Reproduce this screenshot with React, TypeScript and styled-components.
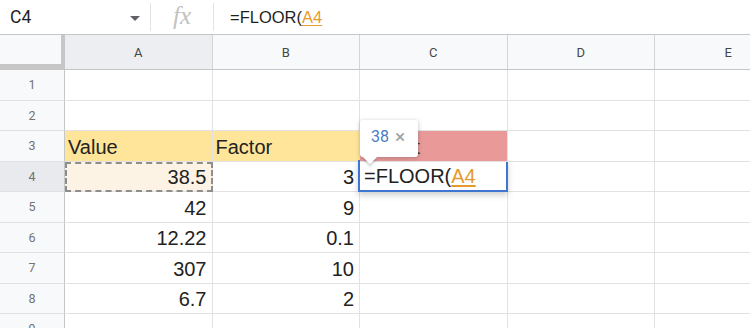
import styled, { createGlobalStyle } from "styled-components";

const GlobalStyle = createGlobalStyle`
  html, body {
    margin: 0;
    padding: 0;
    background: #ffffff;
  }
  body {
    font-family: "Liberation Sans", Arial, sans-serif;
  }
`;

const COLS = ["A", "B", "C", "D", "E"];
const HEAD_W = 65;
const COL_W = 147.5;

type CellData = { text?: string; align?: "left" | "right"; fill?: string };

const ROWS: CellData[][] = [
  [],
  [],
  [
    { text: "Value", fill: "#ffe599" },
    { text: "Factor", fill: "#ffe599" },
    { text: "Result", fill: "#ea9999" },
  ],
  [{ text: "38.5", align: "right" }, { text: "3", align: "right" }],
  [{ text: "42", align: "right" }, { text: "9", align: "right" }],
  [{ text: "12.22", align: "right" }, { text: "0.1", align: "right" }],
  [{ text: "307", align: "right" }, { text: "10", align: "right" }],
  [{ text: "6.7", align: "right" }, { text: "2", align: "right" }],
  [],
];

const Page = styled.div`
  width: 750px;
  height: 328px;
  overflow: hidden;
  background: #fff;
`;

const FormulaBar = styled.div`
  display: flex;
  align-items: center;
  height: 34px;
  border-bottom: 1px solid #c4c7c5;
  background: #fff;
`;

const NameBox = styled.div`
  width: 150px;
  display: flex;
  align-items: center;
  justify-content: space-between;
  padding: 0 10px 0 10px;
  box-sizing: border-box;
  font-family: Roboto, "Liberation Sans", sans-serif;
  font-size: 17.5px;
  color: #1f1f1f;
`;

const Caret = styled.span`
  width: 0;
  height: 0;
  border-left: 5px solid transparent;
  border-right: 5px solid transparent;
  border-top: 5px solid #5f6368;
  margin-top: 2px;
`;

const Divider = styled.div`
  width: 1px;
  height: 28px;
  background: #e3e3e3;
`;

const FxBox = styled.div`
  width: 62px;
  display: flex;
  align-items: center;
  justify-content: center;
  font-family: "Liberation Serif", "DejaVu Serif", serif;
  font-style: italic;
  font-size: 25px;
  color: #c2c2c2;
  padding-bottom: 2px;
`;

const FormulaText = styled.div`
  padding-left: 16px;
  font-family: "Liberation Sans", Arial, sans-serif;
  font-size: 16.5px;
  color: #1f1f1f;
`;

const Ref = styled.span`
  color: #e69a2e;
  text-decoration: underline;
  text-underline-offset: 2px;
`;

const Grid = styled.div`
  display: grid;
  grid-template-columns: ${HEAD_W}px repeat(${COLS.length}, ${COL_W}px);
  grid-template-rows: 35px;
  grid-auto-rows: 30.5px;
  width: ${HEAD_W + COL_W * COLS.length}px;
`;

const Corner = styled.div`
  background: #f8f9fa;
  box-shadow: inset -4px -6px 0 #c7c7c7;
`;

const ColHead = styled.div<{ $active?: boolean }>`
  display: flex;
  align-items: center;
  justify-content: center;
  background: ${(p) => (p.$active ? "#eceef1" : "#f8f9fa")};
  border-right: 1px solid #d4d4d4;
  border-bottom: 1px solid #c4c7c5;
  box-sizing: border-box;
  font-family: Roboto, "Liberation Sans", sans-serif;
  font-size: 13px;
  color: #444746;
`;

const RowHead = styled.div<{ $active?: boolean }>`
  display: flex;
  align-items: center;
  justify-content: center;
  background: ${(p) => (p.$active ? "#e8eaed" : "#f8f9fa")};
  border-right: 1px solid #c4c7c5;
  border-bottom: 1px solid #e1e1e1;
  box-sizing: border-box;
  font-family: Roboto, "Liberation Sans", sans-serif;
  font-size: 12.5px;
  color: #737373;
`;

const Cell = styled.div<{ $fill?: string; $align?: string; $ref?: boolean; $raised?: boolean }>`
  position: relative;
  display: flex;
  align-items: flex-end;
  justify-content: ${(p) => (p.$align === "right" ? "flex-end" : "flex-start")};
  padding: 0 5px 2px 3px;
  box-sizing: border-box;
  background: ${(p) => p.$fill || (p.$ref ? "#fdf3e5" : "#fff")};
  border-right: 1px solid #e2e2e2;
  border-bottom: 1px solid #e2e2e2;
  font-size: 20px;
  line-height: 23px;
  color: #222;
  white-space: nowrap;
  z-index: ${(p) => (p.$raised ? 3 : "auto")};
  ${(p) => (p.$ref ? "outline: 2px dashed #8d8d8d; outline-offset: -2px;" : "")}
`;

const EditBox = styled.div`
  position: absolute;
  left: -2px;
  top: -2px;
  right: -1px;
  bottom: -1px;
  border: 2px solid #3f76d2;
  background: #fff;
  box-shadow: 0 3px 6px rgba(60, 64, 67, 0.25);
  display: flex;
  align-items: flex-end;
  padding: 0 4px 2px 4px;
  font-size: 20px;
  line-height: 23px;
  color: #222;
  z-index: 2;
`;

const Chip = styled.div`
  position: absolute;
  left: 0;
  bottom: 4px;
  width: 58px;
  height: 37px;
  box-sizing: border-box;
  background: #fff;
  border-radius: 3px;
  box-shadow: 0 1px 4px rgba(60, 64, 67, 0.35);
  display: flex;
  align-items: center;
  gap: 6px;
  padding: 0 0 4px 11px;
  font-family: Roboto, "Liberation Sans", sans-serif;
  z-index: 3;

  &::after {
    content: "";
    position: absolute;
    left: 5px;
    bottom: -5px;
    width: 10px;
    height: 10px;
    background: #fff;
    transform: rotate(45deg);
    box-shadow: 2px 2px 2px rgba(60, 64, 67, 0.2);
  }
`;

const ChipValue = styled.span`
  font-size: 16px;
  color: #4a7cc4;
`;

const ChipClose = styled.span`
  font-size: 19px;
  color: #9aa0a6;
`;

export default function App() {
  return (
    <Page>
      <GlobalStyle />
      <FormulaBar>
        <NameBox>
          C4
          <Caret />
        </NameBox>
        <Divider />
        <FxBox>fx</FxBox>
        <Divider />
        <FormulaText>
          =FLOOR(<Ref>A4</Ref>
        </FormulaText>
      </FormulaBar>
      <Grid>
        <Corner />
        {COLS.map((c) => (
          <ColHead key={c} $active={c === "A"}>
            {c}
          </ColHead>
        ))}
        {ROWS.map((row, r) => {
          const rowNum = r + 1;
          return [
            <RowHead key={`h${rowNum}`} $active={rowNum === 4}>
              {rowNum}
            </RowHead>,
            ...COLS.map((c, ci) => {
              const d = row[ci] || {};
              const isRef = c === "A" && rowNum === 4;
              const isEdit = c === "C" && rowNum === 4;
              const hasChip = c === "C" && rowNum === 3;
              return (
                <Cell
                  key={`${c}${rowNum}`}
                  $fill={d.fill}
                  $align={d.align}
                  $ref={isRef}
                  $raised={hasChip}
                >
                  {d.text}
                  {hasChip && (
                    <Chip>
                      <ChipValue>38</ChipValue>
                      <ChipClose>×</ChipClose>
                    </Chip>
                  )}
                  {isEdit && (
                    <EditBox>
                      =FLOOR(<Ref>A4</Ref>
                    </EditBox>
                  )}
                </Cell>
              );
            }),
          ];
        })}
      </Grid>
    </Page>
  );
}
